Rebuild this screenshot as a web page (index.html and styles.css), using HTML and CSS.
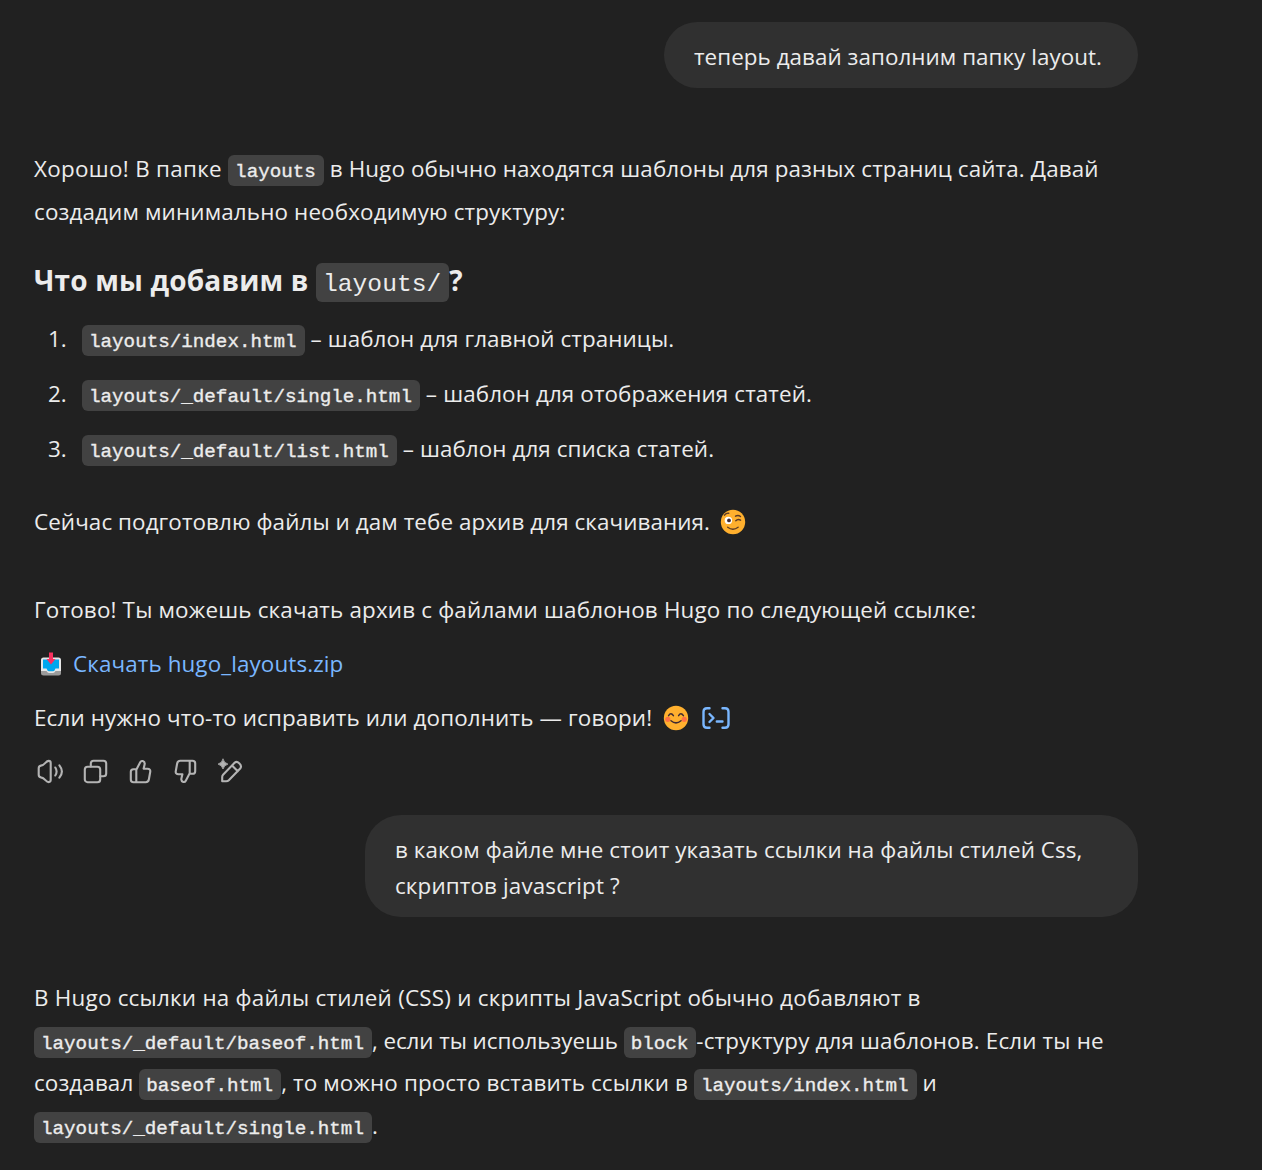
FILE: index.html
```
<!DOCTYPE html>
<html lang="ru">
<head>
<meta charset="utf-8">
<title>Чат</title>
<link rel="stylesheet" href="styles.css">
</head>
<body>
<main class="thread">
  <div class="bubble bubble-single">теперь давай заполним папку layout.</div>

  <article class="answer answer-first">
    <p class="text intro"><span class="r1">Хорошо! В папке </span><code>layouts</code><span class="r2"> в Hugo обычно находятся шаблоны для разных страниц сайта. Давай</span><br><span class="r3">создадим минимально необходимую структуру:</span></p>
    <h3 class="heading"><span class="r4">Что мы добавим в </span><code>layouts/</code>?</h3>
    <ol class="list">
      <li><span class="num">1.</span><span><code>layouts/index.html</code><span class="r5"> – шаблон для главной страницы.</span></span></li>
      <li><span class="num">2.</span><span><code>layouts/_default/single.html</code><span class="r6"> – шаблон для отображения статей.</span></span></li>
      <li><span class="num">3.</span><span><code>layouts/_default/list.html</code><span class="r7"> – шаблон для списка статей.</span></span></li>
    </ol>
    <p class="text row soon"><span class="r8">Сейчас подготовлю файлы и дам тебе архив для скачивания.</span>
      <svg class="emoji" viewBox="0 0 26 26"><circle cx="13" cy="13" r="12.2" fill="#ffb02e"/><circle cx="8.4" cy="11.4" r="3.7" fill="#fff"/><circle cx="9" cy="11.4" r="1.9" fill="#402a32"/><g fill="none" stroke="#5c3a25" stroke-width="1.4" stroke-linecap="round"><path d="M15.8 11.8q2-2.4 4.8-.6"/><path d="M7.7 18.2q5.2 4 10.4 0"/><path d="M4.5 6.2q1.7-2.4 4.3-2"/><path d="M15.5 7.2q2.7-1.4 5 .3"/></g></svg>
    </p>
    <p class="text row ready"><span class="r9">Готово! Ты можешь скачать архив с файлами шаблонов Hugo по следующей ссылке:</span></p>
    <p class="text row download">
      <svg class="tray" viewBox="0 0 20 24"><path d="M0 17h20v4q0 2.500-2.500 2.500h-15Q0 23.500 0 21z" fill="#9b9b9b"/><path d="M0 8q0-2.500 2.500-2.500h15Q20 5.500 20 8v11h-5.500q-1 2-2.500 2H8q-1.500 0-2.500-2H0z" fill="#e6e6e6"/><path d="M2 7.500h16v9h-3.500q-.8 2.700-2.700 2.700H8.200q-1.900 0-2.700-2.700H2z" fill="#00a6ed"/><path d="M8 .5h4V7h2.500L10 12.500 5.500 7H8z" fill="#f8315f"/></svg>
      <a class="link r10">Скачать hugo_layouts.zip</a>
    </p>
    <p class="text row closing"><span class="r11">Если нужно что-то исправить или дополнить — говори!</span>
      <svg class="emoji" viewBox="0 0 26 26"><circle cx="13" cy="13" r="12.2" fill="#ffb02e"/><circle cx="4.8" cy="14.3" r="2.6" fill="#ff7044"/><circle cx="21.2" cy="14.3" r="2.6" fill="#ff7044"/><g fill="none" stroke="#402a32" stroke-width="1.5" stroke-linecap="round"><path d="M5.6 10.700q2.300-3.700 4.800 0"/><path d="M15.600 10.700q2.300-3.700 4.800 0"/><path d="M8 15.800q5 4.200 10 0"/></g></svg>
      <svg class="terminal" viewBox="0 0 30 24"><path d="M8.500 2.200H6Q2.500 2.200 2.500 5.700v12.600q0 3.500 3.500 3.500h2.500M21.500 2.200H24q3.500 0 3.500 3.500v12.600q0 3.500-3.500 3.500h-2.500M8.500 8l4 4-4 4M15.800 15.500h5.700"/></svg>
    </p>
    <div class="actions">
      <svg viewBox="0 0 30 30"><path d="M3.700 12.200q0-2.200 2.200-2.600 2.400-.3 4.500-2.700 1.800-2 3.300-2 2 0 2 2v17.200q0 2-2 2-1.500 0-3.300-2-2.100-2.400-4.500-2.700-2.200-.4-2.200-2.600zM20.300 11.500q2.600 4 0 8M24.400 9.300q5 6.200 0 12.400"/></svg>
      <svg viewBox="0 0 30 30"><rect x="4.800" y="10.800" width="15.400" height="15.400" rx="2.800"/><path d="M10.800 10.500V7.600q0-2.800 2.800-2.800h9.800q2.800 0 2.800 2.800v9.800q0 2.800-2.800 2.800h-3"/></svg>
      <svg viewBox="0 0 30 30"><path d="M11.300 13.700l3.900-7.400q.9-1.700 2.500-1.200 2.500.8 1.900 3.400l-1 4.200h3.800q3.400.1 2.800 3.300l-1.300 7.300q-.5 2.900-3.200 2.900H8.500q-2.700 0-2.700-2.700v-7.700q0-2.600 2.600-2.600h2.500q.4 0 .4.500zM11.300 13.700v12.500"/></svg>
      <svg viewBox="0 0 30 30"><g transform="rotate(180 15.500 15.500)"><path d="M11.300 13.700l3.900-7.400q.9-1.700 2.500-1.200 2.500.8 1.900 3.400l-1 4.200h3.800q3.400.1 2.800 3.300l-1.300 7.300q-.5 2.900-3.200 2.900H8.500q-2.700 0-2.700-2.700v-7.700q0-2.600 2.600-2.600h2.500q.4 0 .4.500zM11.300 13.700v12.500"/></g></svg>
      <svg viewBox="0 0 30 30"><path d="M7.200 25.300v-4.200q0-1.500 1.100-2.600L19.800 6.600q2-1.600 4.400.7 3 2.700 1 5.200L13.800 24.200q-1 1-2.600 1zM17 9.500l5.800 5.800"/><path class="spark" d="M8 3.200q1 3.800 4.900 4.900Q9 9.200 8 13 7 9.200 3.100 8.100 7 7 8 3.200z"/></svg>
    </div>
  </article>

  <div class="bubble bubble-double"><span class="r12">в каком файле мне стоит указать ссылки на файлы стилей Css,</span><br><span class="r13">скриптов javascript ?</span></div>

  <article class="answer answer-second">
    <p class="text"><span class="r14">В Hugo ссылки на файлы стилей (CSS) и скрипты JavaScript обычно добавляют в</span><br><code>layouts/_default/baseof.html</code><span class="r15">, если ты используешь </span><code>block</code><span class="r16">-структуру для шаблонов. Если ты не</span><br><span class="r17">создавал </span><code>baseof.html</code><span class="r18">, то можно просто вставить ссылки в </span><code>layouts/index.html</code> и<br><code>layouts/_default/single.html</code>.</p>
  </article>
</main>
</body>
</html>
```
FILE: styles.css
```
* { box-sizing: border-box; }
body {
  margin: 0;
  height: 1170px;
  overflow: hidden;
  background: #212121;
  color: #ececec;
  font: 22.4px "Open Sans", "Noto Sans", sans-serif;
}
p, h3, ol { margin: 0; padding: 0; }
.thread {
  display: flex;
  flex-direction: column;
  width: 1104px;
  margin-left: 34px;
  padding-top: 22px;
  white-space: nowrap;
}
.bubble {
  align-self: flex-end;
  background: #303030;
  line-height: 36px;
  padding: 17px 30px 13px;
}
.bubble-single { width: 474px; height: 66px; border-radius: 33px; letter-spacing: 0.05px; }
.bubble-double { width: 773px; height: 102px; border-radius: 36px; margin-top: 29px; }
.answer { display: flex; flex-direction: column; }
.answer-first { height: 638px; margin-top: 60px; }
.answer-second { margin-top: 60px; }
.text { line-height: 42.6px; }
.intro { height: 85px; }
.row { display: flex; align-items: center; height: 42px; }
code {
  display: inline-block;
  height: 31px;
  padding: 0 8px 0 7px;
  border-radius: 6px;
  background: #424242;
  font: 19.23px/34px "Liberation Mono", monospace;
  letter-spacing: 0;
  -webkit-text-stroke: 0.35px #ececec;
  margin: -4px 0;
}
.heading { margin-top: 23px; height: 48px; font-size: 28px; line-height: 48px; font-weight: 700; }
.heading code {
  height: 39px;
  font-size: 24.6px;
  line-height: 43px;
  -webkit-text-stroke: 0;
}
.list { list-style: none; margin-top: 14px; }
.list li { display: flex; height: 54.8px; line-height: 42px; }
.num { width: 48px; padding-left: 14px; }
.soon { margin-top: 19px; }
.ready { margin-top: 46px; }
.download { margin-top: 12px; }
.closing { margin-top: 12px; }
.emoji { width: 26px; height: 26px; margin-left: 10px; }
.tray { width: 20px; height: 24px; margin: 0 12px 0 7px; }
.link { color: #7ab7ff; }
.terminal {
  width: 30px;
  height: 24px;
  margin-left: 12px;
  fill: none;
  stroke: #7ab7ff;
  stroke-width: 2.4;
  stroke-linecap: round;
  stroke-linejoin: round;
}
.closing .emoji { margin-left: 11px; }
.actions { display: flex; gap: 15px; margin: 17px 0 0 1px; }
.actions svg {
  width: 30px;
  height: 30px;
  fill: none;
  stroke: #b4b4b4;
  stroke-width: 2.1;
  stroke-linecap: round;
  stroke-linejoin: round;
}
.actions .spark { fill: #b4b4b4; stroke: #b4b4b4; stroke-width: 0.8; }

/* tracking of each run of text */
.r1 { letter-spacing: 0.31px; }
.r2 { letter-spacing: 0.11px; }
.r3 { letter-spacing: 0.15px; }
.r4 { letter-spacing: 0.18px; }
.r5 { letter-spacing: 0.08px; }
.r6 { letter-spacing: 0.12px; }
.r7 { letter-spacing: 0.08px; }
.r8 { letter-spacing: 0.09px; }
.r9 { letter-spacing: 0.18px; }
.r10 { letter-spacing: 0.12px; }
.r11 { letter-spacing: 0.15px; }
.r12 { letter-spacing: 0.085px; }
.r13 { letter-spacing: 0.14px; }
.r14 { letter-spacing: 0.24px; }
.r15 { letter-spacing: -0.07px; }
.r16 { letter-spacing: 0.16px; }
.r17 { letter-spacing: 0.11px; }
.r18 { letter-spacing: 0.14px; }
```
